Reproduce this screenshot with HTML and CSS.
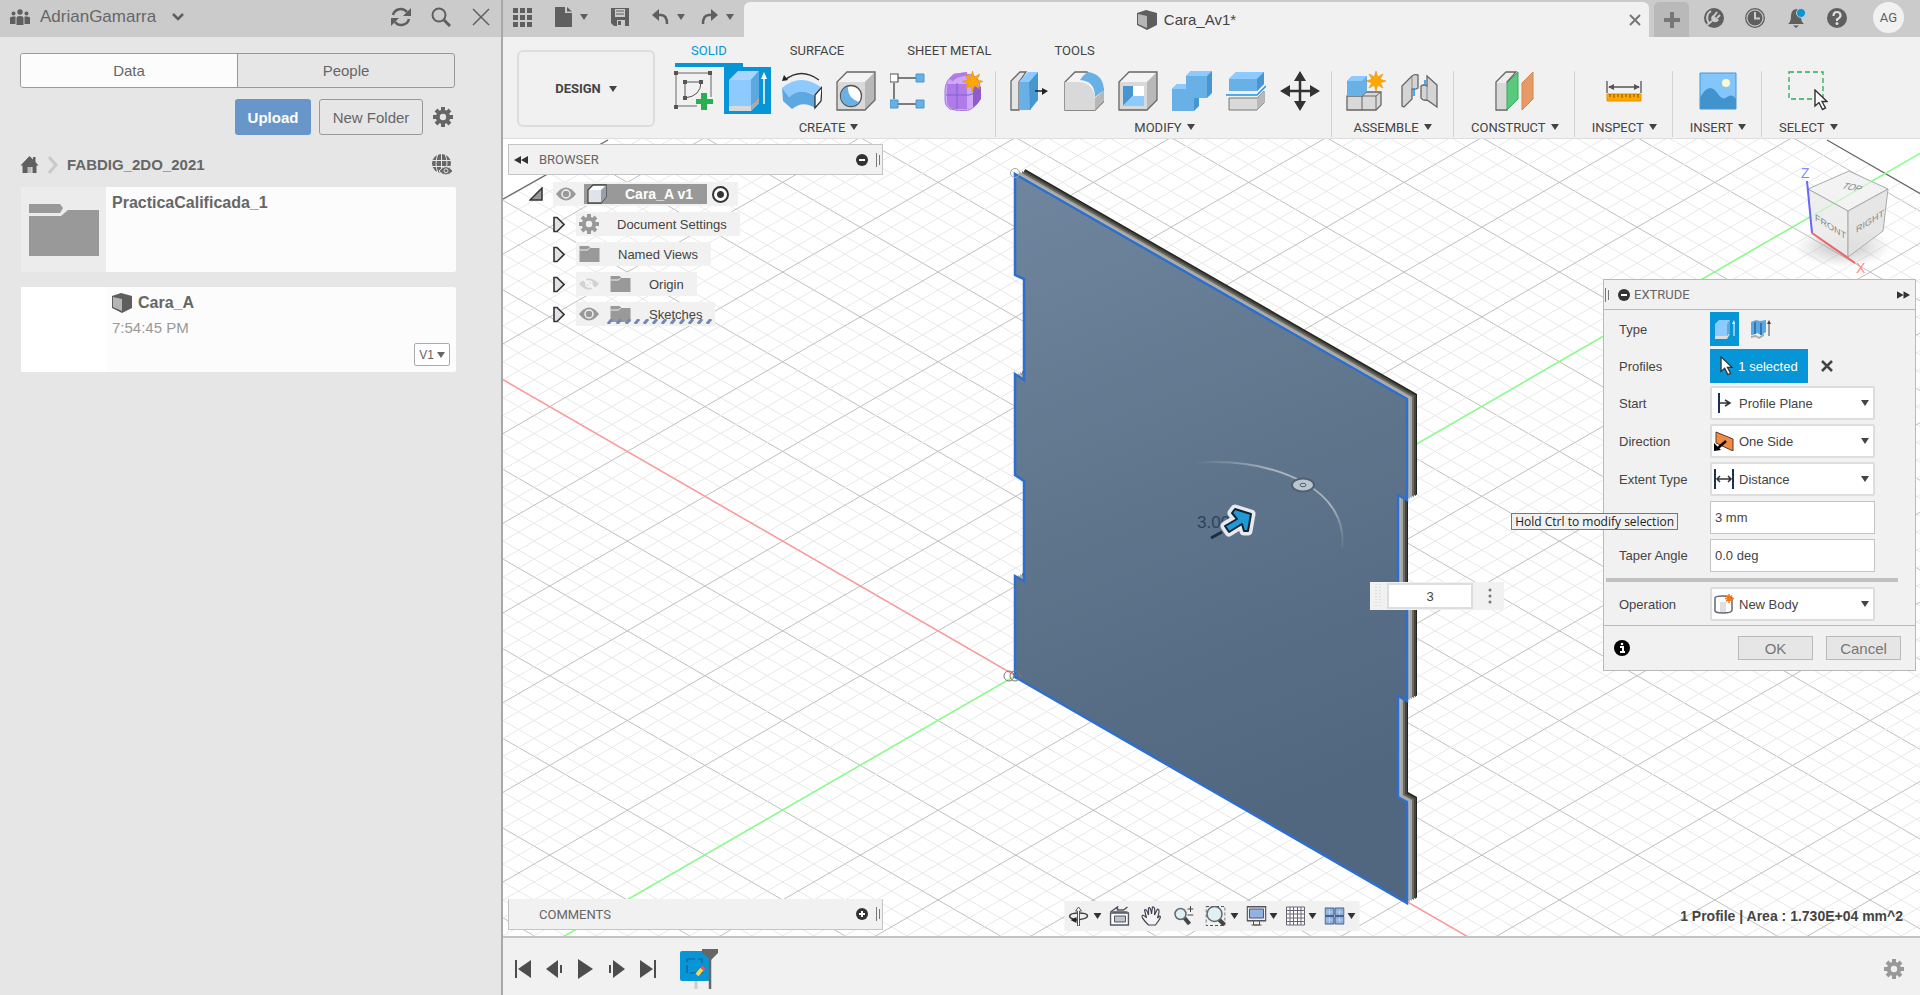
FILE: index.html
```html
<!DOCTYPE html>
<html lang="en">
<head>
    <meta charset="UTF-8">
    <meta name="viewport" content="width=device-width, initial-scale=1.0">
    <title>Cara_A v1</title>
    <link rel="stylesheet" href="styles.css">
</head>
<body>
    <svg class="defs" aria-hidden="true">
        <symbol id="gear" viewBox="0 0 20 20">
            <path fill="none" stroke="currentColor" stroke-width="4" d="M10 0v4M10 16v4M0 10h4M16 10h4M3 3l2.700 2.700M14.300 14.300l2.700 2.700M3 17l2.700-2.700M14.300 5.700l2.700-2.700"/>
            <circle cx="10" cy="10" r="5.200" fill="none" stroke="currentColor" stroke-width="4"/>
        </symbol>
        <symbol id="caret" viewBox="0 0 8 6"><path d="M0 0h8L4 6z" fill="currentColor"/></symbol>
        <symbol id="cube" viewBox="0 0 20 20">
            <path d="M0 3L9 0l11 3v12l-10 5L0 15z" fill="#5e5e5e"/>
            <path d="M1 4l9 2v12l-9-4z" fill="#b5b5b5"/>
        </symbol>
        <symbol id="folder" viewBox="0 0 20 16"><path d="M0 0h9l2 2h9v14H0z" fill="#999"/><path d="M0 4h8l2-2" stroke="#f1f1f1" fill="none"/></symbol>
        <symbol id="eye" viewBox="0 0 20 14">
            <path d="M0 7Q10-6 20 7Q10 20 0 7z" fill="#999"/>
            <circle cx="10" cy="7" r="4" fill="#999" stroke="#f1f1f1" stroke-width="1.5"/>
        </symbol>
        <symbol id="star" viewBox="0 0 20 20"><path fill="#ffa800" stroke="#e39200" stroke-width=".6" d="M10 0l1.7 5.9L17 3l-2.9 5.3L20 10l-5.9 1.7L17 17l-5.3-2.9L10 20l-1.7-5.9L3 17l2.9-5.3L0 10l5.9-1.7L3 3l5.3 2.9z"/></symbol>
        <symbol id="expand" viewBox="0 0 12 16"><path d="M1 1h3l7 7-7 7H1z" fill="#dfe2e6" stroke="#333" stroke-width="1.6"/></symbol>
        <symbol id="pointer" viewBox="0 0 14 22"><path d="M1 1v16l4-3.500 3.500 7 3-1.500-3.500-6.500h5z" fill="#fff" stroke="#333" stroke-width="1.4"/></symbol>
        <symbol id="grip" viewBox="0 0 4 14"><path d="M.5 0v14M3.500 2v10" stroke="#777" fill="none"/></symbol>
    </svg>

    <aside class="data-panel">
        <header class="data-header">
            <svg class="people" viewBox="0 0 20 16" fill="#5f5f5f"><circle cx="10" cy="3" r="2.700"/><circle cx="3.500" cy="4.500" r="2"/><circle cx="16.500" cy="4.500" r="2"/><path d="M6.500 16V9q0-2 3.500-2t3.500 2v7zM0 15V9q0-1.500 3-1.500h2.500V15zM20 15V9q0-1.500-3-1.500h-2.500V15z"/></svg>
            <span class="user-name">AdrianGamarra</span>
            <svg class="chevron" viewBox="0 0 12 8"><path d="M1 1l5 5 5-5" fill="none" stroke="#5f5f5f" stroke-width="2.500"/></svg>
            <div class="header-tools">
                <button aria-label="Refresh"><svg class="i20" viewBox="0 0 20 20"><path d="M2 8a8 8 0 0 1 14-3M18 12a8 8 0 0 1-14 3" fill="none" stroke="#5f5f5f" stroke-width="2.500"/><path d="M20 1v8h-8zM0 19v-8h8z" fill="#5f5f5f"/></svg></button>
                <button aria-label="Search"><svg class="i20" viewBox="0 0 20 20"><circle cx="8" cy="8" r="6.500" fill="none" stroke="#5f5f5f" stroke-width="2"/><path d="M12.500 12.500l6.500 6.500" stroke="#5f5f5f" stroke-width="3"/></svg></button>
                <button aria-label="Close panel"><svg class="i20" viewBox="0 0 20 20"><path d="M2 2l16 16M18 2L2 18" stroke="#5f5f5f" stroke-width="1.500"/></svg></button>
            </div>
        </header>

        <div class="data-body">
            <div class="segment">
                <button class="active">Data</button>
                <button>People</button>
            </div>
            <div class="actions">
                <button class="upload">Upload</button>
                <button class="new-folder">New Folder</button>
                <button class="plain" aria-label="Settings"><svg class="i20"><use href="#gear"/></svg></button>
            </div>
            <nav class="crumbs">
                <svg class="home" viewBox="0 0 18 17"><path d="M9 0l3.500 3.500V1H15v5l3 3.500h-2V17h-4v-6H9v6H2V9.500H0zM6 11v6H4.500" fill="#5f5f5f"/><path d="M7 17v-6h4v6" fill="#bbb"/></svg>
                <svg class="sep" viewBox="0 0 10 18"><path d="M1 1l7 8-7 8" fill="none" stroke="#c9c9c9" stroke-width="3"/></svg>
                <a href="#">FABDIG_2DO_2021</a>
                <svg class="globe" viewBox="0 0 21 21"><circle cx="9.500" cy="9.500" r="9.500" fill="#666"/><path d="M9.500 0v19M0 6.500h19M0 12.500h19M6 0Q2 9.500 6 19M13 0q4 9.500 0 19" fill="none" stroke="#e6e6e6"/><path d="M7 17q7-9 14 0q-7 8-14 0z" fill="#666" stroke="#e6e6e6"/><circle cx="14" cy="16.800" r="2" fill="#666" stroke="#e6e6e6"/></svg>
            </nav>
            <article class="card">
                <div class="thumb"><svg class="big-folder" viewBox="0 0 70 52" fill="#999"><path d="M0 0h31l3 4-3 5H0zM0 12h32l7-6h31v46H0z"/></svg></div>
                <div class="card-text"><h3>PracticaCalificada_1</h3></div>
            </article>
            <article class="card">
                <div class="thumb empty"></div>
                <div class="card-text">
                    <h3><svg class="i20"><use href="#cube"/></svg>Cara_A</h3>
                    <time>7:54:45 PM</time>
                    <button class="version">V1<svg class="caret"><use href="#caret"/></svg></button>
                </div>
            </article>
        </div>
    </aside>

    <main class="workspace">
        <header class="tabbar">
            <div class="file-tools">
                <button aria-label="Show data panel"><svg width="19" height="19" viewBox="0 0 19 19" fill="#5f5f5f"><path d="M0 0h5v5H0zM7 0h5v5H7zM14 0h5v5h-5zM0 7h5v5H0zM7 7h5v5H7zM14 7h5v5h-5zM0 14h5v5H0zM7 14h5v5H7zM14 14h5v5h-5z"/></svg></button>
                <button aria-label="File"><svg width="17" height="20" viewBox="0 0 17 20" fill="#5f5f5f"><path d="M0 0h10v6h7v14H0zM12 0l5 4.500h-5z"/></svg><svg class="caret"><use href="#caret"/></svg></button>
                <button aria-label="Save"><svg width="18" height="18" viewBox="0 0 18 18"><path d="M0 0h18v18H3l-3-3z" fill="#5f5f5f"/><path d="M4 1h10v8H4zM6 12h8v6H6z" fill="#cbcbcb"/><path d="M5 3h8M5 6h8" stroke="#5f5f5f"/><path d="M7 13h3v4H7z" fill="#5f5f5f"/></svg></button>
                <button aria-label="Undo"><svg width="17" height="16" viewBox="0 0 17 16"><path d="M7 0L0 6l7 6z" fill="#5f5f5f"/><path d="M5 6h4q6 0 6 9" fill="none" stroke="#5f5f5f" stroke-width="2.500"/></svg><svg class="caret"><use href="#caret"/></svg></button>
                <button aria-label="Redo"><svg width="17" height="16" viewBox="0 0 17 16"><path d="M10 0l7 6-7 6z" fill="#5f5f5f"/><path d="M12 6H8q-6 0-6 9" fill="none" stroke="#5f5f5f" stroke-width="2.500"/></svg><svg class="caret"><use href="#caret"/></svg></button>
            </div>
            <div class="doc-tab">
                <span class="doc-title"><svg class="i20"><use href="#cube"/></svg>Cara_Av1*</span>
                <button aria-label="Close document"><svg width="12" height="12" viewBox="0 0 12 12"><path d="M1 1l10 10M11 1L1 11" stroke="#777" stroke-width="2"/></svg></button>
            </div>
            <button class="new-tab" aria-label="New tab"><svg width="16" height="16" viewBox="0 0 16 16"><path d="M8 0v16M0 8h16" stroke="#777" stroke-width="4"/></svg></button>
            <div class="account-tools">
                <button aria-label="Extensions"><svg class="i20" viewBox="0 0 20 20"><circle cx="10" cy="10" r="10" fill="#5f5f5f"/><path d="M7 3a8 8 0 0 0-2 12" fill="none" stroke="#cbcbcb" stroke-width="2"/><path d="M3 17l5-4" stroke="#cbcbcb" stroke-width="2"/><path d="M8 13q-2-4 1-6l6 5q-3 4-7 1z" fill="#cbcbcb"/><path d="M10 8l3-4M13 10l3-3" stroke="#cbcbcb" stroke-width="2"/></svg></button>
                <button aria-label="Job status"><svg class="i20" viewBox="0 0 20 20"><circle cx="10" cy="10" r="9.300" fill="none" stroke="#5f5f5f" stroke-width="1.300"/><circle cx="10" cy="10" r="7.500" fill="#5f5f5f"/><path d="M10 4v6.500h5" fill="none" stroke="#cbcbcb" stroke-width="2"/></svg></button>
                <button aria-label="Notifications"><svg class="i20" viewBox="0 0 20 20"><path d="M2 16q3-2 3-8 0-6 5-7 5 1 5 7 0 6 3 8zM7 17.500h6L10 20z" fill="#5f5f5f"/><circle cx="15" cy="5" r="4.500" fill="#0696d7" stroke="#cbcbcb"/></svg></button>
                <button aria-label="Help"><svg class="i20" viewBox="0 0 20 20"><circle cx="10" cy="10" r="10" fill="#5f5f5f"/><path d="M6.500 8q0-4 3.500-4t3.500 3.500q0 2-3.500 4v1.500" fill="none" stroke="#ddd" stroke-width="2.200"/><circle cx="10" cy="15.500" r="1.500" fill="#ddd"/></svg></button>
                <button class="avatar">AG</button>
            </div>
        </header>

        <div class="toolbar">
            <button class="workspace-switch">DESIGN<svg class="caret"><use href="#caret"/></svg></button>
            <div class="ribbon">
                <nav class="ribbon-tabs">
                    <button class="active">SOLID</button>
                    <button>SURFACE</button>
                    <button>SHEET METAL</button>
                    <button>TOOLS</button>
                </nav>
                <div class="groups">
                    <div class="group">
                        <div class="tools">
                            <button aria-label="Create sketch"><svg viewBox="0 0 40 40"><path d="M2 2h35v33H2z" fill="none" stroke="#666"/><path d="M11 11h16M11 11v16M27 11q0 14-16 16" fill="none" stroke="#555"/><path d="M0 0h4v4H0zM34 0h4v4h-4zM0 34h4v4H0zM9 9h4v4H9zM25 9h4v4h-4zM9 25h4v4H9z" fill="#555"/><path d="M25 26h14v14H22z" fill="#f1f1f1"/><path d="M27 22h6v6h6v5h-6v6h-6v-6h-5v-5h5z" fill="#29ae52"/></svg></button>
                            <button class="on" aria-label="Extrude"><svg viewBox="0 0 40 40"><path d="M1 35l9-3h21v-4l0 4-8 8H1z" fill="#d9d9d9"/><path d="M23 35l8-9v5l-8 9z" fill="#aaa"/><path d="M1 9L10 0h21l-8 9z" fill="#a8d6ff"/><path d="M1 9h22v26H1z" fill="#8dcaff"/><path d="M23 9l8-9v26l-8 9z" fill="#5da8e0"/><path d="M36 7v26" stroke="#fff" stroke-width="1.500"/><path d="M33 8l3-7 3 7z" fill="#fff"/></svg></button>
                            <button aria-label="Revolve"><svg viewBox="0 0 40 40"><path d="M3 9q16-13 34 0" fill="none" stroke="#333" stroke-width="1.500"/><path d="M0 10l2-6 4 5z" fill="#222"/><path d="M0 17q19-16 40 0l-7 8q-12-9-26 1z" fill="#8dcaff"/><path d="M0 17l7 9q12-10 26-1v12q-12-8-23 1L1 30z" fill="#5da8e0"/><path d="M40 16l-7 8v13l6-7z" fill="#fff" stroke="#333" stroke-width="1.300"/></svg></button>
                            <button aria-label="Hole"><svg viewBox="0 0 40 40"><path d="M1 11L11 1h28v28L29 39H1z" fill="#d9d9d9"/><path d="M1 11L11 1h28L29 11z" fill="#f4f4f4"/><path d="M39 1v28L29 39V11z" fill="#b8b8b8"/><path d="M1 11L11 1h28v28L29 39H1z" fill="none" stroke="#666" stroke-width="1.300"/><circle cx="15" cy="25" r="10.500" fill="#fff" stroke="#555" stroke-width="1.300"/><path d="M12 15.500q-1 11 11 15.500a10 10 0 1 1-11-15.500z" fill="#68b0e6"/></svg></button>
                            <button aria-label="Rectangular pattern"><svg viewBox="0 0 40 40"><path d="M8 7h18M4 12v16M8 33h18" stroke="#555" stroke-width="1.500"/><path d="M0 3h8v8H0z" fill="#fff" stroke="#555" stroke-width="1.200"/><path d="M26 3h8v8h-8zM0 29h8v8H0zM26 29h8v8h-8z" fill="#68b0e6" stroke="#4896d0"/></svg></button>
                            <button aria-label="Create form"><svg viewBox="0 0 40 40"><path d="M1 19Q1 10 10 3q8-1 18 1 8 4 8 12v12q-4 8-11 11-10 2-19-1-5-3-5-9z" fill="#cfa8f7" stroke="#a678dd"/><path d="M3 13h20v25H9q-6-2-6-8z" fill="#b07be8"/><path d="M29 15l8 1v12q-4 6-8 8z" fill="#8f5cc9"/><path d="M13 12v26M2 24h23l11-4" stroke="#76c" fill="none"/><path d="M7 9q6-6 16-6" stroke="#b07be8" stroke-width="4" fill="none"/><use href="#star" x="18" y="0" width="21" height="21"/></svg></button>
                        </div>
                        <button class="group-label">CREATE<svg class="caret"><use href="#caret"/></svg></button>
                    </div>
                    <div class="group">
                        <div class="tools">
                            <button aria-label="Press pull"><svg viewBox="0 0 40 40"><path d="M1 10l9-9h6l-7 10v28H1z" fill="#e4e4e4" stroke="#666" stroke-width="1.300"/><path d="M9 11l9-10h10l-9 10z" fill="#8dcaff"/><path d="M9 11h12v28H9z" fill="#68b0e6"/><path d="M19 11l9-10v28l-8 10z" fill="#4896d0"/><path d="M25 20h8" stroke="#222" stroke-width="1.500"/><path d="M32 17l6 3-6 4z" fill="#222"/></svg></button>
                            <button aria-label="Fillet"><svg viewBox="0 0 40 40"><path d="M1 11L11 1h12l17 18v11l-9 9H1z" fill="#f4f4f4" stroke="#666" stroke-width="1.300"/><path d="M1 11h15q14 2 15 17v11H1z" fill="#d9d9d9"/><path d="M31 27l9-8v11l-9 9z" fill="#b8b8b8"/><path d="M16 9q4-6 8-8 15 2 16 18l-9 7q0-16-15-17z" fill="#68b0e6"/></svg></button>
                            <button aria-label="Shell"><svg viewBox="0 0 40 40"><path d="M1 11L11 1h28v28L29 39H1z" fill="#d9d9d9"/><path d="M1 11L11 1h28L29 11z" fill="#f4f4f4"/><path d="M39 1v28L29 39V11z" fill="#b8b8b8"/><path d="M1 11L11 1h28v28L29 39H1z" fill="none" stroke="#666" stroke-width="1.300"/><path d="M5 15h21v20H5z" fill="#fff"/><path d="M5 15h10v10L5 35z" fill="#4896d0"/><path d="M15 25h11v10H5z" fill="#8dcaff"/></svg></button>
                            <button aria-label="Combine"><svg viewBox="0 0 40 40"><path d="M0 18l5-5h9V5l5-5h21v22l-5 5h-8v8l-5 5H0z" fill="#4896d0"/><path d="M0 18h14V5h21v22H22v13H0z" fill="#68b0e6"/><path d="M0 18l5-5h9v5zM14 5l5-5h21l-5 5z" fill="#8dcaff"/></svg></button>
                            <button aria-label="Split body"><svg viewBox="0 0 40 40"><path d="M3 8l7-7h28v12l-7 7H3z" fill="#68b0e6"/><path d="M3 8l7-7h28l-7 7z" fill="#8dcaff"/><path d="M31 8l7-7v12l-7 7z" fill="#4896d0"/><path d="M0 24h31l9-9" fill="none" stroke="#1b95e8" stroke-width="1.500"/><path d="M3 27h28l7-7v12l-7 7H3z" fill="#d9d9d9" stroke="#777"/><path d="M31 27l7-7v12l-7 7z" fill="#b8b8b8"/></svg></button>
                            <button aria-label="Move"><svg viewBox="0 0 40 40"><path d="M20 5v30M5 20h30" stroke="#333" stroke-width="2.500"/><path d="M20 0l6 10H14zM20 40l6-10H14zM0 20l10-6v12zM40 20l-10-6v12z" fill="#333"/></svg></button>
                        </div>
                        <button class="group-label">MODIFY<svg class="caret"><use href="#caret"/></svg></button>
                    </div>
                    <div class="group wide">
                        <div class="tools">
                            <button aria-label="New component"><svg viewBox="0 0 40 40"><path d="M1 25h15l4-4h15v13l-5 5H1z" fill="#d9d9d9" stroke="#666" stroke-width="1.300"/><path d="M16 25v14M16 25h14l5-4M30 25v14" stroke="#666" fill="none"/><path d="M1 10l5-5h15v15l-5 5H1z" fill="#68b0e6"/><path d="M1 10l5-5h15l-5 5z" fill="#8dcaff"/><use href="#star" x="20" y="0" width="20" height="20"/></svg></button>
                            <button aria-label="Joint"><svg viewBox="0 0 40 40"><path d="M2 15L9 7v21l-7 8z" fill="#d4d4d4"/><path d="M2 15L12 5q2-2 6-1v13q-3 2-6 1v10L4 36l-2-1z" fill="#d4d4d4" stroke="#666" stroke-width="1.300"/><path d="M12 6v12" stroke="#888"/><path d="M21 15q3-2 6 0V5l10 9v22L27 29q-4 1-6-2z" fill="#d4d4d4" stroke="#666" stroke-width="1.300"/><path d="M27 15v14" stroke="#888"/><path d="M14 17v8M25 9v6" stroke="#1b95e8" stroke-width="1.500"/></svg></button>
                        </div>
                        <button class="group-label">ASSEMBLE<svg class="caret"><use href="#caret"/></svg></button>
                    </div>
                    <div class="group narrow">
                        <div class="tools">
                            <button aria-label="Construct plane"><svg viewBox="0 0 40 40"><path d="M1 11L11 1h10L12 11v28H1z" fill="#eee" stroke="#666" stroke-width="1.300"/><path d="M2 12h10v26H2z" fill="#d9d9d9"/><path d="M12 12L23 1v27L12 39z" fill="#59c97e" stroke="#38a95d"/><path d="M27 12L38 1v27L27 39z" fill="#e79a66" stroke="#d5854f"/></svg></button>
                        </div>
                        <button class="group-label">CONSTRUCT<svg class="caret"><use href="#caret"/></svg></button>
                    </div>
                    <div class="group narrow">
                        <div class="tools">
                            <button aria-label="Measure"><svg viewBox="0 0 40 40"><path d="M3 10v12M37 10v12M5 16h30" stroke="#555" stroke-width="1.300"/><path d="M4 16l6-3v6zM36 16l-6-3v6z" fill="#555"/><path d="M3 23h34v7H3z" fill="#ffa800" stroke="#e39200"/><path d="M6 23v3M10 23v4M14 23v3M18 23v4M22 23v3M26 23v4M30 23v3M34 23v4" stroke="#7a5200"/></svg></button>
                        </div>
                        <button class="group-label">INSPECT<svg class="caret"><use href="#caret"/></svg></button>
                    </div>
                    <div class="group narrow">
                        <div class="tools">
                            <button aria-label="Insert image"><svg viewBox="0 0 40 40"><path d="M2 2h36v36H2z" fill="#82c6fa"/><path d="M2 27q9-18 18-4 5 7 9 3 5-4 9 2v10H2z" fill="#4093cd"/><path d="M2 2h36v36H2z" fill="none" stroke="#4896d0"/><circle cx="28" cy="12" r="4" fill="#fff9cf"/></svg></button>
                        </div>
                        <button class="group-label">INSERT<svg class="caret"><use href="#caret"/></svg></button>
                    </div>
                    <div class="group narrow last">
                        <div class="tools">
                            <button aria-label="Select"><svg viewBox="0 0 40 40"><path d="M1 1h34v27H1z" fill="none" stroke="#29ae52" stroke-width="1.300" stroke-dasharray="5 3"/><use href="#pointer" x="26" y="18" width="14" height="22"/></svg></button>
                        </div>
                        <button class="group-label">SELECT<svg class="caret"><use href="#caret"/></svg></button>
                    </div>
                </div>
            </div>
        </div>

        <section class="viewport">
            <svg class="scene" viewBox="503 139 1417 797" preserveAspectRatio="xMidYMid slice">
                <defs>
                    <linearGradient id="face" x1="0" y1="0" x2="0" y2="1" gradientTransform="rotate(-12)">
                        <stop offset="0" stop-color="#6f869e"/><stop offset=".5" stop-color="#5e758c"/><stop offset="1" stop-color="#51667f"/>
                    </linearGradient>
                    <linearGradient id="arc" x1="1195" y1="462" x2="1345" y2="550" gradientUnits="userSpaceOnUse">
                        <stop offset="0" stop-color="#aab2ba" stop-opacity="0"/><stop offset=".4" stop-color="#aab2ba"/><stop offset=".8" stop-color="#aab2ba"/><stop offset="1" stop-color="#aab2ba" stop-opacity="0"/>
                    </linearGradient>
                    <radialGradient id="shadow"><stop offset="0" stop-color="#999" stop-opacity=".6"/><stop offset="1" stop-color="#999" stop-opacity="0"/></radialGradient>
                    <clipPath id="ground"><path d="M480 212L608 140L1054-118L1827 140L1920 193L2000 238V1000H480z"/></clipPath>
                    <path id="plate" d="M1015 174L1407 399V500L1398 495V598L1407 603V701L1398 696V797L1407 802V903L1015 677V576L1024 581V481L1015 475V374L1024 380V279L1015 275z"/>
                </defs>
                <g id="grid" clip-path="url(#ground)"></g>
                <path d="M480 212L608 140M1827 140L1940 205" stroke="#666" stroke-width="1.300" fill="none"/>
                <path d="M480 984.700L1943 140" stroke="#8f8" stroke-width="1.500"/>
                <path d="M480 366.400L1480 943.800" stroke="#f99" stroke-width="1.500"/>

                <use href="#plate" x="10" y="-5" fill="#22221e"/>
                <use href="#plate" x="9" y="-4" fill="#44443e"/>
                <use href="#plate" x="7" y="-3" fill="#6b6a62"/>
                <use href="#plate" x="5" y="-2" fill="#a9a7a2"/>
                <use href="#plate" x="3" y="-1" fill="#b5b3ae"/>
                <use href="#plate" fill="url(#face)" stroke="#2d6fd0" stroke-width="2.500"/>

                <path d="M1195 463C1240 459 1276 468 1303 482C1330 497 1346 520 1342 550" fill="none" stroke="url(#arc)" stroke-width="2"/>
                <ellipse cx="1303" cy="485" rx="11" ry="6.500" fill="#bcc6d0" stroke="#51606f" stroke-width="2"/>
                <ellipse cx="1303" cy="485" rx="3" ry="1.800" fill="none" stroke="#51606f"/>
                <text class="dim" x="1197" y="528">3.00</text>
                <path d="M1211 538L1222 532" stroke="#1b2c49" stroke-width="3"/>
                <path d="M1225 526L1237 519L1232 513L1235 509L1251 514L1248 531L1244 531L1242 524L1229 532z" fill="#1f9ad6" stroke="#e6eaee" stroke-width="9" stroke-linejoin="round"/>
                <path d="M1225 526L1237 519L1232 513L1235 509L1251 514L1248 531L1244 531L1242 524L1229 532z" fill="#1f9ad6" stroke="#123" stroke-width="2" stroke-linejoin="round"/>
                <g fill="none" stroke="#777"><circle cx="1009" cy="676" r="5"/><circle cx="1015" cy="676" r="5"/><circle cx="1015" cy="173" r="4.500" stroke="#aaa"/></g>

                <!-- view cube -->
                <ellipse cx="1843" cy="247" rx="48" ry="20" fill="url(#shadow)"/>
                <g stroke="#aaa" fill-opacity=".88">
                    <path d="M1808 189L1849 171L1888 189L1848 211z" fill="#f1f1f1"/>
                    <path d="M1808 189L1848 211V257L1812 233z" fill="#ececec"/>
                    <path d="M1888 189L1848 211V257L1883 231z" fill="#e2e2e2"/>
                </g>
                <path d="M1815 214.500L1885 174" stroke="#8f8" stroke-opacity=".5"/>
                <path d="M1807 181L1812 233" stroke="#66f" stroke-width="2"/>
                <path d="M1812 233L1855 263" stroke="#e66" stroke-width="2"/>
                <text class="axis" x="1801" y="178" fill="#88f">Z</text>
                <text class="axis" x="1856" y="273" fill="#f88">X</text>
                <text class="cube-face" transform="translate(1815 220) skewY(32)">FRONT</text>
                <text class="cube-face" transform="translate(1856 233) skewY(-32)">RIGHT</text>
                <text class="cube-face" transform="translate(1841 188) rotate(12) skewX(-30)">TOP</text>
            </svg>

            <div class="overlay">
                <div class="left-col">
                    <div class="browser">
                        <header class="pane-head">
                            <svg width="14" height="8" viewBox="0 0 14 8"><path d="M7 0v8L0 4zM14 0v8L7 4z" fill="#333"/></svg>
                            <span>BROWSER</span>
                            <button aria-label="Collapse browser"><svg width="12" height="12" viewBox="0 0 12 12"><circle cx="6" cy="6" r="6" fill="#333"/><path d="M3 6h6" stroke="#fff" stroke-width="2"/></svg></button>
                            <svg class="grip"><use href="#grip"/></svg>
                        </header>
                        <ul class="tree">
                            <li class="root">
                                <svg width="14" height="14" viewBox="0 0 14 14"><path d="M13 1v12H1z" fill="#999" stroke="#333" stroke-width="1.500"/></svg>
                                <div class="chip">
                                    <svg class="eye"><use href="#eye"/></svg>
                                    <strong><svg class="i20" viewBox="0 0 20 20"><path d="M1 6l5-5h13v12l-5 6H1z" fill="#fff" stroke="#444" stroke-width="1.300"/><path d="M2 6h12v12H2z" fill="#dfe3ea"/><path d="M14 6l5-5v12l-5 6z" fill="#9aa0aa"/></svg><span>Cara_A v1</span></strong>
                                    <input type="radio" name="active-component" aria-label="Activate Cara_A v1" checked>
                                </div>
                            </li>
                            <li><svg class="expand"><use href="#expand"/></svg><div class="chip"><svg class="i20 muted"><use href="#gear"/></svg><span>Document Settings</span></div></li>
                            <li><svg class="expand"><use href="#expand"/></svg><div class="chip"><svg class="folder"><use href="#folder"/></svg><span>Named Views</span></div></li>
                            <li><svg class="expand"><use href="#expand"/></svg><div class="chip"><svg class="eye off" viewBox="0 0 20 14"><path d="M0 7Q10-4 20 7Q10 18 0 7z" fill="#999"/><circle cx="10" cy="7" r="3" fill="none" stroke="#fff" stroke-width="1.500"/><path d="M2 0l16 14" stroke="#fff" stroke-width="2.500"/></svg><svg class="folder"><use href="#folder"/></svg><span>Origin</span></div></li>
                            <li><svg class="expand"><use href="#expand"/></svg><div class="chip"><svg class="eye"><use href="#eye"/></svg><svg class="folder"><use href="#folder"/></svg><span>Sketches</span><svg class="hatch" viewBox="0 0 110 5"><path d="M1 5l4-5M10 5l4-5M19 5l4-5M28 5l4-5M37 5l4-5M46 5l4-5M55 5l4-5M64 5l4-5M73 5l4-5M82 5l4-5M91 5l4-5M100 5l4-5" stroke="#7389b3" stroke-width="3"/></svg></div></li>
                        </ul>
                    </div>
                    <header class="pane-head comments">
                        <span>COMMENTS</span>
                        <button aria-label="Expand comments"><svg width="12" height="12" viewBox="0 0 12 12"><circle cx="6" cy="6" r="6" fill="#333"/><path d="M3 6h6M6 3v6" stroke="#fff" stroke-width="2"/></svg></button>
                        <svg class="grip"><use href="#grip"/></svg>
                    </header>
                </div>

                <form class="dialog">
                    <header class="dialog-head">
                        <svg class="grip"><use href="#grip"/></svg>
                        <svg width="12" height="12" viewBox="0 0 12 12"><circle cx="6" cy="6" r="6" fill="#333"/><path d="M3 6h6" stroke="#fff" stroke-width="2"/></svg>
                        <span>EXTRUDE</span>
                        <svg class="ff" viewBox="0 0 14 8"><path d="M0 0v8l7-4zM7 0v8l7-4z" fill="#333"/></svg>
                    </header>
                    <div class="fields">
                        <div class="field wide"><span class="name">Type</span>
                            <button type="button" class="type on" aria-label="Extrude"><svg class="i20" viewBox="0 0 20 20"><path d="M0 17l4-2h11l-3 5H0z" fill="#ddd"/><path d="M0 5l4-4h11v12l-3 4H0z" fill="#8dcaff"/><path d="M15 1v12l-3 4V5z" fill="#5da8e0"/><path d="M19 3v14" stroke="#fff"/><path d="M17 5l2-4 1 4z" fill="#fff"/></svg></button>
                            <button type="button" class="type" aria-label="Thin extrude"><svg class="i20" viewBox="0 0 20 20"><path d="M0 17l5-1 3 2 5-4v3l-5 3-3-2-5 1z" fill="#aaa"/><path d="M0 3l5-2 4 1 6-1v12l-5 3-4-2-4 2H0z" fill="#5da8e0"/><path d="M4 3v12M10 4v12" stroke="#2f77b5" stroke-width="2"/><path d="M18 3v14" stroke="#444"/><path d="M16 5l2-4 2 4z" fill="#444"/></svg></button>
                        </div>
                        <div class="field wide"><span class="name">Profiles</span>
                            <button type="button" class="selected"><svg width="13" height="20"><use href="#pointer"/></svg>1 selected</button>
                            <button type="button" class="clear" aria-label="Clear selection"><svg width="12" height="12" viewBox="0 0 12 12"><path d="M1 1l10 10M11 1L1 11" stroke="#444" stroke-width="2.500"/></svg></button>
                        </div>
                        <div class="field"><label for="start">Start</label>
                            <div class="select"><svg viewBox="0 0 20 20"><path d="M5 0v20" stroke="#1c2f56" stroke-width="2"/><path d="M6 10h9M11 7l5 3-5 3" stroke="#333" stroke-width="1.500" fill="none"/></svg><select id="start"><option>Profile Plane</option></select><svg class="caret"><use href="#caret"/></svg></div></div>
                        <div class="field"><label for="direction">Direction</label>
                            <div class="select"><svg viewBox="0 0 20 20"><path d="M2 1l17 7v12L2 12z" fill="#f08a45" stroke="#5a3a22"/><path d="M12 10l-8 7" stroke="#000" stroke-width="2.500"/><path d="M0 20v-8l7 7z" fill="#000"/></svg><select id="direction"><option>One Side</option></select><svg class="caret"><use href="#caret"/></svg></div></div>
                        <div class="field"><label for="extent">Extent Type</label>
                            <div class="select"><svg viewBox="0 0 20 20"><path d="M1 0v20M19 0v20" stroke="#1c2f56" stroke-width="2"/><path d="M3 10h14M6 7l-3 3 3 3M14 7l3 3-3 3" stroke="#333" stroke-width="1.500" fill="none"/></svg><select id="extent"><option>Distance</option></select><svg class="caret"><use href="#caret"/></svg></div></div>
                        <div class="field"><label for="distance">Distance</label><input type="text" id="distance" value="3 mm"></div>
                        <div class="field"><label for="taper">Taper Angle</label><input type="text" id="taper" value="0.0 deg"></div>
                        <hr>
                        <div class="field"><label for="operation">Operation</label>
                            <div class="select"><svg viewBox="0 0 20 20"><path d="M1 4q0-2 8-2t9 2v12q0 3-9 3t-8-3z" fill="#fff" stroke="#667" stroke-width="1.500"/><path d="M6 8h6v10H6z" fill="#dcdfe3"/><path d="M15 0v9M11 4.500h9M12 1.500l6 6M18 1.500l-6 6" stroke="#f07a1a" stroke-width="1.500"/></svg><select id="operation"><option>New Body</option></select><svg class="caret"><use href="#caret"/></svg></div></div>
                    </div>
                    <footer class="dialog-foot">
                        <svg width="16" height="16" viewBox="0 0 16 16"><circle cx="8" cy="8" r="8" fill="#000"/><path d="M6 7h3v5M6 12h5" stroke="#fff" stroke-width="2" fill="none"/><circle cx="8" cy="4" r="1.300" fill="#fff"/></svg>
                        <button type="button">OK</button>
                        <button type="button">Cancel</button>
                    </footer>
                </form>
            </div>

            <div class="nav-bar">
                <button class="menu" aria-label="Orbit"><svg class="i20" viewBox="0 0 20 20"><path d="M5 13q-4-1-4-3 1-3 9-3 9 0 9 3 0 3-12 4" fill="none" stroke="#444" stroke-width="1.500"/><path d="M9 20V5H7l3-4 3 4h-2v15z" fill="#fff" stroke="#555"/><path d="M2 14l6-3v6z" fill="#222"/></svg><svg class="caret"><use href="#caret"/></svg></button>
                <button aria-label="Look at"><svg class="i20" viewBox="0 0 20 20"><path d="M1 7h18v12H1z" fill="#fff" stroke="#556" stroke-width="1.500"/><path d="M5 10h11v6H5z" fill="#bcc3cd" stroke="#556"/><path d="M1 6l7-5v3h6l4-3M3 6h15" stroke="#556" stroke-width="1.500" fill="none"/></svg></button>
                <button aria-label="Pan"><svg class="i20" viewBox="0 0 20 20"><path d="M7 19Q1 13 0 10q2-2 5 2L3 4q2-2 4 5L7 2q2-2 3 6l1-7q3-1 2 8l3-6q3 0 0 9l2-2q3 0-4 9z" fill="#f4f4f4" stroke="#445" stroke-width="1.200"/></svg></button>
                <button aria-label="Zoom"><svg class="i20" viewBox="0 0 20 20"><path d="M11 12l5 6" stroke="#444" stroke-width="4"/><circle cx="7" cy="8" r="5.500" fill="#dff0f3" stroke="#667" stroke-width="1.500"/><path d="M17 0v6M14 3h6M14 9h6" stroke="#444"/></svg></button>
                <button class="menu" aria-label="Zoom window"><svg class="i20" viewBox="0 0 20 20"><path d="M.5.500h19v19H.5z" fill="none" stroke="#555" stroke-dasharray="3 2"/><path d="M13 13l6 6" stroke="#444" stroke-width="4"/><circle cx="9" cy="8" r="7.500" fill="#dff0f3" stroke="#667" stroke-width="1.500"/></svg><svg class="caret"><use href="#caret"/></svg></button>
                <button class="menu" aria-label="Display settings"><svg class="i20" viewBox="0 0 20 20"><path d="M.7.700h18.600v14H.7z" fill="#eee" stroke="#555" stroke-width="1.400"/><path d="M3 3h14v9H3z" fill="#8fb4e3" stroke="#557"/><path d="M7 15v4h6v-4M5 19h10" stroke="#555" fill="none"/></svg><svg class="caret"><use href="#caret"/></svg></button>
                <button class="menu" aria-label="Grid and snaps"><svg class="i20" viewBox="0 0 20 20"><path d="M1 1h18v18H1zM4.500 1v18M8 1v18M12 1v18M15.500 1v18M1 4.500h18M1 8h18M1 12h18M1 15.500h18" fill="#fff" stroke="#667"/></svg><svg class="caret"><use href="#caret"/></svg></button>
                <button class="menu" aria-label="Viewports"><svg class="i20" viewBox="0 0 20 20"><path d="M.5 2h9v7.500h-9zM10.500 2h9v7.500h-9zM.5 10.500h9V18h-9zM10.500 10.500h9V18h-9z" fill="#8fb0dc" stroke="#4a6087"/><path d="M2 6h6M12 6h6M2 14h6M12 14h6M5 3v6M15 3v6M5 11v6M15 11v6" stroke="#b7d0f0"/></svg><svg class="caret"><use href="#caret"/></svg></button>
            </div>

            <div class="float-input">
                <svg width="8" height="26" viewBox="0 0 8 26"><path d="M2 1v24M6 1v24" stroke="#ccc" stroke-dasharray="1 2"/></svg>
                <input type="text" value="3" aria-label="Distance value">
                <button aria-label="More"><svg width="4" height="16" viewBox="0 0 4 16" fill="#777"><circle cx="2" cy="2" r="1.500"/><circle cx="2" cy="8" r="1.500"/><circle cx="2" cy="14" r="1.500"/></svg></button>
            </div>
            <div class="tooltip">Hold Ctrl to modify selection</div>
            <div class="status">1 Profile | Area : 1.730E+04 mm^2</div>
        </section>

        <footer class="timeline">
            <button aria-label="Go to start"><svg viewBox="0 0 17 20"><path d="M1 1v18" stroke="#4d4d4d" stroke-width="2"/><path d="M16 1v18L3 10z" fill="#4d4d4d"/></svg></button>
            <button aria-label="Step back"><svg viewBox="0 0 17 20"><path d="M12 1v18L0 10z" fill="#4d4d4d"/><path d="M15 6v8" stroke="#4d4d4d" stroke-width="2"/></svg></button>
            <button aria-label="Play"><svg viewBox="0 0 17 20"><path d="M1 0v20l15-10z" fill="#4d4d4d"/></svg></button>
            <button aria-label="Step forward"><svg viewBox="0 0 17 20"><path d="M5 1v18l12-9z" fill="#4d4d4d"/><path d="M2 6v8" stroke="#4d4d4d" stroke-width="2"/></svg></button>
            <button aria-label="Go to end"><svg viewBox="0 0 17 20"><path d="M1 1v18l13-9z" fill="#4d4d4d"/><path d="M16 1v18" stroke="#4d4d4d" stroke-width="2"/></svg></button>
            <button class="feature" aria-label="Sketch1"><svg viewBox="0 0 38 40"><path d="M16 30v10" stroke="#ccc" stroke-width="3"/><rect y="2" width="30" height="30" rx="2" fill="#0696d7"/><path d="M7 10h15v14H7z" fill="none" stroke="#245a8a" stroke-width="1.200" stroke-dasharray="8 3"/><path d="M17 26l5-6" stroke="#ffd14d" stroke-width="4"/><path d="M22 20l2-2" stroke="#e0566b" stroke-width="4"/><path d="M22 0h16v4l-7 7-9-7z" fill="#666"/><path d="M30 6v34" stroke="#666" stroke-width="2.500"/></svg></button>
            <button class="settings" aria-label="Timeline settings"><svg class="i20 muted"><use href="#gear"/></svg></button>
        </footer>
    </main>

    <script>
        // Ground plane grid: two families of 30 degree lines, every fifth one is major
        const originX = 1015.7;
        const originY = 675.7;
        const slope = 0.5774;
        const step = 17.94;
        const grid = document.getElementById("grid");

        function addLine(k, dir) {
            let major = k % 5 === 0;
            let y = originY + k * step;
            let line = document.createElementNS("http://www.w3.org/2000/svg", "line");
            line.setAttribute("x1", 480);
            line.setAttribute("x2", 1940);
            line.setAttribute("y1", y + dir * slope * (480 - originX));
            line.setAttribute("y2", y + dir * slope * (1940 - originX));
            line.setAttribute("class", major ? "major" : "minor");
            grid.appendChild(line);
        }

        for (let k = -56; k < 50; k++) {
            addLine(k, 1);
        }
        for (let k = -43; k < 50; k++) {
            addLine(k, -1);
        }
    </script>
</body>
</html>
```
FILE: styles.css
```css
* {
    box-sizing: border-box;
}
body {
    margin: 0;
    display: flex;
    height: 100vh;
    overflow: hidden;
    font-family: "Liberation Sans", Arial, sans-serif;
    font-size: 13px;
    color: #444;
    background: #f1f1f1;
}
button {
    display: flex;
    align-items: center;
    justify-content: center;
    padding: 0;
    border: none;
    background: none;
    font: inherit;
    color: inherit;
}
svg {
    display: block;
    flex: none;
}
.defs {
    position: absolute;
    width: 0;
    height: 0;
}
.i20 {
    width: 20px;
    height: 20px;
}
.caret {
    width: 8px;
    height: 6px;
}
.muted {
    color: #999;
}
.grip {
    width: 4px;
    height: 14px;
}

/* data panel */
.data-panel {
    width: 503px;
    flex: none;
    background: #e6e6e6;
    border-right: 2px solid #a8a8a8;
    color: #666;
}
.data-header {
    height: 37px;
    display: flex;
    align-items: center;
    padding: 0 10px 4px 10px;
    background: #cbcbcb;
}
.people {
    width: 20px;
    height: 16px;
}
.user-name {
    margin: 0 16px 0 10px;
    font-size: 17px;
}
.chevron {
    width: 12px;
    height: 8px;
}
.header-tools {
    display: flex;
    gap: 20px;
    margin-left: auto;
}
.data-body {
    padding: 16px 45px 0 20px;
}
.segment {
    display: flex;
    height: 35px;
    margin-right: 1px;
    border: 1px solid #999;
    border-radius: 3px;
    overflow: hidden;
}
.segment button {
    flex: 1;
    font-size: 15px;
}
.segment .active {
    background: #fcfcfc;
    border-right: 1px solid #999;
}
.actions {
    display: flex;
    justify-content: flex-end;
    align-items: center;
    gap: 8px;
    margin-top: 11px;
    padding-right: 3px;
}
.upload, .new-folder {
    height: 36px;
    border-radius: 3px;
    font-size: 15px;
}
.upload {
    width: 76px;
    background: #6896ca;
    color: #fff;
    font-weight: bold;
}
.new-folder {
    width: 104px;
    margin-right: 2px;
    border: 1px solid #999;
}
.crumbs {
    display: flex;
    align-items: center;
    gap: 9px;
    height: 21px;
    margin: 19px 0 12px;
    padding-right: 3px;
    font-size: 15px;
    font-weight: bold;
}
.crumbs a {
    color: #666;
    text-decoration: none;
}
.home {
    width: 19px;
    height: 17px;
}
.sep {
    width: 10px;
    height: 18px;
}
.globe {
    width: 21px;
    height: 21px;
    margin-left: auto;
}
.card {
    display: flex;
    height: 85px;
    margin: 0 0 15px 1px;
    border-radius: 2px;
    background: #fcfcfc;
}
.thumb {
    width: 85px;
    display: flex;
    align-items: center;
    justify-content: center;
    background: #ececec;
}
.thumb.empty {
    background: #fff;
}
.big-folder {
    width: 70px;
    height: 52px;
}
.card-text {
    flex: 1;
    display: flex;
    flex-direction: column;
    padding: 6px;
}
.card-text h3 {
    display: flex;
    align-items: center;
    gap: 6px;
    height: 20px;
    margin: 0;
    font-size: 16px;
}
.card-text time {
    margin-top: 6px;
    font-size: 15px;
    color: #999;
}
.version {
    gap: 3px;
    width: 36px;
    height: 23px;
    margin: auto 0 0 auto;
    border: 1px solid #aaa;
    border-radius: 2px;
    background: #fff;
    font-size: 12px;
}

/* top bar */
.workspace {
    flex: 1;
    min-width: 0;
    display: flex;
    flex-direction: column;
}
.tabbar {
    display: flex;
    height: 37px;
    padding-top: 2px;
    background: #cbcbcb;
    color: #5f5f5f;
}
.file-tools {
    display: flex;
    align-items: center;
    gap: 23px;
    width: 241px;
    padding: 0 9px 5px 10px;
}
.file-tools button {
    gap: 8px;
}
.file-tools button:nth-child(n+4) {
    margin-right: -7px;
}
.doc-tab {
    flex: 1;
    display: flex;
    align-items: center;
    padding: 0 8px 0 0;
    border-radius: 6px 6px 0 0;
    background: #f1f1f1;
}
.doc-title {
    flex: 1;
    display: flex;
    align-items: center;
    justify-content: center;
    gap: 7px;
    font-size: 15px;
    color: #444;
}
.new-tab {
    width: 35px;
    margin: 0 15px 0 5px;
    border-radius: 5px 5px 0 0;
    background: #b9b9b9;
}
.account-tools {
    display: flex;
    align-items: center;
    gap: 21px;
    padding: 0 16px 4px 0;
}
.avatar {
    width: 31px;
    height: 31px;
    margin-left: 5px;
    border-radius: 50%;
    background: #f1f1f1;
    font-family: Roboto, sans-serif;
}

/* ribbon */
.toolbar {
    display: flex;
    height: 102px;
    padding-left: 14px;
    border-bottom: 1px solid #ddd;
    font-family: Roboto, sans-serif;
    color: #444;
}
.workspace-switch {
    gap: 8px;
    width: 138px;
    height: 77px;
    margin-top: 13px;
    border: 2px solid #ddd;
    border-radius: 6px;
    font-weight: bold;
}
.ribbon {
    flex: 1;
    display: flex;
    flex-direction: column;
    padding-left: 5px;
}
.ribbon-tabs {
    display: flex;
    gap: 31px;
    height: 30px;
    padding-left: 15px;
}
.ribbon-tabs button {
    padding: 0 16px;
    border-bottom: 4px solid transparent;
}
.ribbon-tabs .active {
    color: #0696d7;
    border-color: #0696d7;
}
.groups {
    display: flex;
}
.group {
    position: relative;
    display: flex;
    flex-direction: column;
    align-items: center;
    padding: 0 9px 0 10px;
}
/* divider line between two groups */
.group::after {
    content: "";
    position: absolute;
    right: 0;
    top: 4px;
    bottom: 0;
    width: 1px;
    background: #d3d3d3;
}
.group.wide {
    padding-right: 11px;
}
.group.narrow {
    padding: 0 16px 0 17px;
}
.group.last::after {
    display: none;
}
.tools {
    display: flex;
    gap: 7px;
}
.tools button {
    width: 47px;
    height: 47px;
}
.tools svg {
    width: 40px;
    height: 40px;
}
.tools .on {
    background: #0696d7;
}
.group-label {
    gap: 5px;
    height: 20px;
    margin-top: 3px;
}

/* viewport */
.viewport {
    position: relative;
    flex: 1;
    min-height: 0;
    background: #fff;
}
.scene {
    position: absolute;
    width: 100%;
    height: 100%;
}
.minor {
    stroke: #e8e8e8;
}
.major {
    stroke: #bfbfbf;
}
.dim {
    font-size: 17px;
    fill: #2c4260;
}
.axis {
    font-size: 14px;
}
.cube-face {
    font-size: 9px;
    fill: #888;
}
.overlay {
    position: relative;
    display: flex;
    justify-content: space-between;
    height: 100%;
    padding: 5px 4px 6px 5px;
}
.left-col {
    width: 375px;
    display: flex;
    flex-direction: column;
    justify-content: space-between;
}
.pane-head {
    display: flex;
    align-items: center;
    height: 31px;
    padding: 0 2px 0 5px;
    border: 1px solid #c4c4c4;
    background: #f1f1f1;
    font-family: Roboto, sans-serif;
    color: #666;
}
.pane-head span {
    margin-left: 11px;
}
.pane-head button {
    margin: 0 8px 0 auto;
}
.pane-head.comments {
    padding-left: 19px;
    border-top: none;
}
.tree {
    display: flex;
    flex-direction: column;
    gap: 6px;
    margin: 7px 0 0;
    padding: 0 0 0 45px;
    list-style: none;
}
.tree li {
    display: flex;
    align-items: center;
    gap: 11px;
    height: 24px;
}
.tree .root {
    gap: 10px;
    margin-left: -24px;
}
.chip {
    position: relative;
    display: flex;
    align-items: center;
    height: 24px;
    padding: 0 13px 0 3px;
    background: #f1f1f1;
}
.chip span {
    margin-left: 18px;
}
.chip strong {
    display: flex;
    align-items: center;
    height: 20px;
    margin: 0 5px 0 8px;
    padding: 0 14px 0 3px;
    background: #999;
    color: #fff;
    font-size: 14px;
}
.chip .eye + .folder {
    margin-left: 11px;
}
.root .chip {
    padding-right: 9px;
}
.expand {
    width: 12px;
    height: 17px;
}
.eye {
    width: 20px;
    height: 14px;
}
.eye.off {
    opacity: .35;
}
.folder {
    width: 21px;
    height: 16px;
}
.hatch {
    position: absolute;
    left: 30px;
    bottom: 2px;
    width: 112px;
    height: 5px;
}
input[type="radio"] {
    appearance: none;
    width: 17px;
    height: 17px;
    margin: 0;
    border: 2px solid #333;
    border-radius: 50%;
    background: radial-gradient(#333 3px, #fff 4px);
}

/* extrude dialog */
.dialog {
    align-self: flex-start;
    width: 313px;
    margin-top: 135px;
    border: 1px solid #b9b9b9;
    background: #f1f1f1;
}
.dialog-head {
    display: flex;
    align-items: center;
    height: 30px;
    padding: 0 5px 0 1px;
    border-bottom: 1px solid #b9b9b9;
    font-family: Roboto, sans-serif;
    color: #666;
}
.dialog-head .grip {
    margin-right: 9px;
}
.dialog-head span {
    margin-left: 4px;
}
.ff {
    width: 13px;
    height: 8px;
    margin-left: auto;
}
.fields {
    padding: 2px 0 0;
}
.field {
    display: flex;
    align-items: center;
    height: 34px;
    margin-bottom: 4px;
    padding-left: 15px;
}
.field.wide {
    margin-bottom: 3px;
}
.field label, .field .name {
    width: 91px;
}
.type {
    width: 29px;
    height: 34px;
    margin-right: 7px;
}
.type.on {
    background: #0696d7;
}
.selected {
    gap: 5px;
    width: 98px;
    height: 34px;
    background: #0696d7;
    color: #fff;
}
.clear {
    margin-left: 13px;
}
.select {
    position: relative;
    width: 165px;
    height: 34px;
}
/* option icon and arrow sit over the native drop-down */
.select svg {
    position: absolute;
    left: 4px;
    top: 7px;
    width: 20px;
    height: 20px;
    pointer-events: none;
    z-index: 1;
}
.select .caret {
    left: auto;
    right: 6px;
    top: 14px;
    width: 8px;
    height: 6px;
}
.select select {
    appearance: none;
    width: 100%;
    height: 100%;
    padding: 0 20px 0 27px;
    border: 2px solid #ddd;
    border-radius: 2px;
    background: #fff;
    font: inherit;
    color: inherit;
}
.field input {
    width: 165px;
    height: 33px;
    padding: 0 4px;
    border: 1px solid #c4c4c4;
    background: #fff;
    font: inherit;
    color: inherit;
}
hr {
    height: 4px;
    margin: 6px 17px 5px 2px;
    border: none;
    background: #c1c1c1;
}
.dialog-foot {
    display: flex;
    align-items: center;
    height: 45px;
    padding: 0 14px 0 10px;
    border-top: 1px solid #b9b9b9;
}
.dialog-foot button {
    width: 75px;
    height: 24px;
    margin-left: 13px;
    border: 1px solid #b9b9b9;
    background: #e6e6e6;
    font-size: 15px;
    color: #777;
}
.dialog-foot svg + button {
    margin-left: auto;
}

/* things floating over the canvas */
.nav-bar {
    position: absolute;
    left: 50%;
    bottom: 5px;
    transform: translateX(-50%);
    display: flex;
    align-items: center;
    gap: 8px;
    height: 30px;
    padding: 0 4px;
    background: #f1f1f1;
    color: #333;
}
.nav-bar button {
    gap: 3px;
    margin-right: 4px;
}
.nav-bar .menu {
    margin-right: 0;
}
.nav-bar .menu:first-child, .nav-bar .menu:nth-child(5) {
    gap: 5px;
}
.float-input {
    position: absolute;
    left: 867px;
    top: 443px;
    display: flex;
    align-items: center;
    height: 28px;
    padding: 0 12px 0 4px;
    background: #f1f1f1;
}
.float-input input {
    width: 86px;
    height: 26px;
    margin: 0 15px 0 5px;
    border: 2px solid #ddd;
    text-align: center;
    font: inherit;
    color: inherit;
}
.tooltip {
    position: absolute;
    right: 242px;
    top: 374px;
    height: 17px;
    padding: 0 3px;
    border: 1px solid #777;
    background: #f1f1f1;
    font-family: "Open Sans", sans-serif;
    font-size: 12px;
    line-height: 15px;
    color: #222;
}
.status {
    position: absolute;
    right: 17px;
    bottom: 12px;
    font-size: 14px;
    font-weight: bold;
}

/* timeline */
.timeline {
    display: flex;
    align-items: center;
    gap: 14px;
    height: 59px;
    padding: 4px 16px 0 12px;
    border-top: 2px solid #c4c4c4;
}
.timeline svg {
    width: 17px;
    height: 20px;
}
.timeline .feature {
    margin-left: 10px;
}
.timeline .feature svg {
    width: 38px;
    height: 40px;
}
.timeline .settings {
    margin-left: auto;
}
.timeline .settings svg {
    width: 20px;
}
```
